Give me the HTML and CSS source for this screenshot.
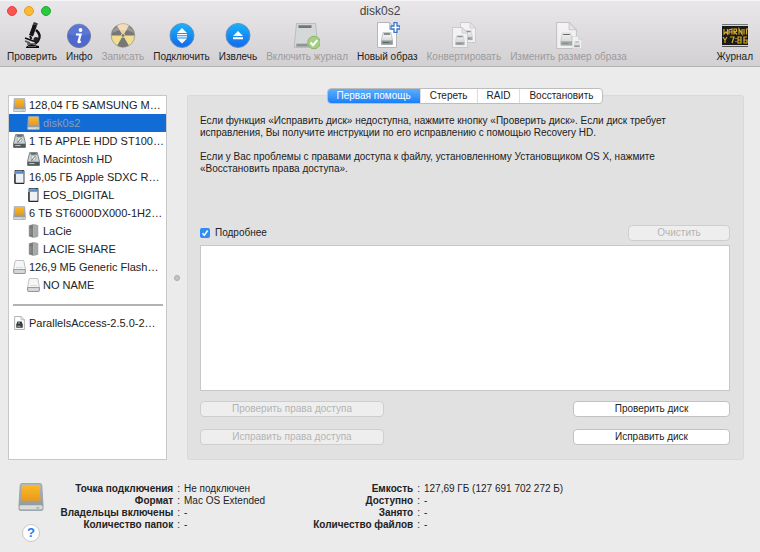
FILE: index.html
```html
<!DOCTYPE html>
<html lang="ru">
<head>
<meta charset="utf-8">
<title>disk0s2</title>
<link rel="stylesheet" href="styles.css">
</head>
<body>
<svg class="defs" aria-hidden="true">
  <defs>
    <linearGradient id="orange" x1="0" y1="0" x2="0" y2="1"><stop offset="0" stop-color="#fdb924"/><stop offset="1" stop-color="#e99a1c"/></linearGradient>
    <linearGradient id="metal" x1="0" y1="0" x2="0" y2="1"><stop offset="0" stop-color="#b4b8bb"/><stop offset="1" stop-color="#8f9498"/></linearGradient>
    <linearGradient id="silver" x1="0" y1="0" x2="0" y2="1"><stop offset="0" stop-color="#fdfdfd"/><stop offset="1" stop-color="#c4c8c9"/></linearGradient>
    <linearGradient id="blue" x1="0" y1="0" x2="0" y2="1"><stop offset="0" stop-color="#18b4fb"/><stop offset="1" stop-color="#1567ea"/></linearGradient>
    <symbol id="ext" viewBox="0 0 24 27">
      <path d="M3 .5h18q1.200 0 1.400 1.500l1.200 19v4q0 1.500-1.500 1.500H1.900Q.4 26.500.4 25v-4L1.600 2Q1.800.5 3 .5z" fill="url(#metal)" stroke="#9a9fa3" stroke-width=".8"/>
      <path d="M3.700 2h16.600l.8 15H2.900z" fill="url(#orange)"/>
      <rect x="1" y="21.500" width="22" height="4" rx="1" fill="#d9dddd"/>
      <path d="M17 24h3" stroke="#71b873" stroke-width="1"/>
    </symbol>
    <symbol id="flash" viewBox="0 0 13 14">
      <path d="M2 1.500q0-1 1-1h7q1 0 1 1l1.400 8v3q0 1-1 1H1.600q-1 0-1-1v-3z" fill="#f6f6f6" stroke="#b0b3b5" stroke-width=".8"/>
      <path d="M.7 9.500h11.600v3q0 1-1 1H1.700q-1 0-1-1z" fill="#d5d7d8" stroke="#85898b" stroke-width=".8"/>
      <path d="M3 7.500h7" stroke="#dadcdd"/>
    </symbol>
    <symbol id="hdd" viewBox="0 0 12 13">
      <path d="M2.500.5h7l2 8v4H.5v-4z" fill="#cdd3d3" stroke="#6f7777" stroke-width=".8"/>
      <path d="M3.300 1.800h5.600" stroke="#3d4242" stroke-width="1.200"/>
      <circle cx="6" cy="5.500" r="2.300" fill="#e7ebeb" stroke="#929a9a" stroke-width=".6"/>
      <path d="M7.500 4 4 8" stroke="#515858" stroke-width=".8"/>
      <path d="M.6 9h10.800v3.500H.6z" fill="#525858"/><path d="M2 10.700h5" stroke="#bbc1c1"/>
    </symbol>
    <symbol id="sd" viewBox="0 0 11 14">
      <path d="M1 .5h9v13H1z" fill="#eef1f4" stroke="#3e454c"/>
      <path d="M1.500 1h8v2.700h-8z" fill="#4580c7"/><path d="M3 .5v2M5 .5v2M7 .5v2" stroke="#b9d2ef" stroke-width=".7"/>
      <path d="M.9 4v9.500M1 13.400h9" stroke="#252b31" stroke-width="1.200"/>
    </symbol>
    <symbol id="tower" viewBox="0 0 10 13">
      <path d="m1 1.500 4-1v12l-4-1.200z" fill="#747678"/><path d="m5 .5 4 .8v10.200l-4 1z" fill="#a6a8aa"/>
      <path d="m1 1.500 4-1 4 .8v10.200l-4 1-4-1.200z" fill="none" stroke="#8a8c8e" stroke-width=".6"/>
      <path d="M2.200 4v6M3.500 3.700v6.500" stroke="#999b9d" stroke-width=".5"/>
    </symbol>
    <symbol id="drive" viewBox="0 0 12 13">
      <path d="M2 .5h8L11.500 8v4.500H.5V8z" fill="url(#silver)" stroke="#a4a9a9" stroke-width=".6"/>
      <path d="M2.800 2h6.400" stroke="#343838" stroke-width="1.100"/>
      <path d="M.5 8.500h11v4H.5z" fill="#8d9595"/><path d="M2 10.500h6" stroke="#545b5b" stroke-width=".8"/>
    </symbol>
    <symbol id="doc" viewBox="0 0 20 26">
      <path d="M.5.500h12l7 7v18H.5z" fill="#fcfcfc" stroke="#b6b6b8"/>
      <path d="M12.500.500v7h7z" fill="#e8e8e9" stroke="#b6b6b8" stroke-width=".8"/>
      <use href="#drive" x="4" y="10" width="12" height="13"/>
    </symbol>
  </defs>
</svg>

<header class="titlebar">
  <div class="title-row">
    <div class="lights">
      <button class="light close" aria-label="Закрыть"></button>
      <button class="light minimize" aria-label="Свернуть"></button>
      <button class="light expand" aria-label="Развернуть"></button>
    </div>
    <h1>disk0s2</h1>
  </div>
  <nav class="toolbar">
    <button class="tool">
      <svg viewBox="0 0 26 28" width="26" height="28">
        <path d="m14 2 4 1.500-4 11-4-1.500z" fill="#161616"/><path d="m14.500 1 4 1.500" stroke="#333" stroke-width="2"/>
        <path d="m12.300 5-2.600 7" stroke="#ddd" stroke-width=".7"/>
        <path d="m11 14 1.500 3" stroke="#111" stroke-width="2"/>
        <path d="M17 8q6 5 2 11l-3 3" fill="none" stroke="#111" stroke-width="2.400"/>
        <path d="m6 16 11 4" stroke="#111" stroke-width="1.800"/><circle cx="17" cy="17.500" r="2.500" fill="#222"/>
        <path d="m6 19 5 2M8 22h9" stroke="#555" stroke-width="1.500"/>
        <path d="M7 25q4-4 8-2l5 1v2H7z" fill="#0c0c0c"/><path d="M9 24.500h8" stroke="#999" stroke-width=".6"/>
      </svg>
      <span>Проверить</span>
    </button>
    <button class="tool">
      <svg viewBox="0 0 26 28" width="26" height="28">
        <circle cx="13" cy="14" r="11.500" fill="#4d68cf" stroke="#6f7894"/><path d="M2.500 12a10.500 10.500 0 0 1 21 0q-10 4-21 0z" fill="#6c83da" opacity=".5"/>
        <circle cx="14.500" cy="8" r="1.900" fill="#fff"/>
        <path d="M10 12.500h4.500l-2 7.200q0 1 2.300-.4" fill="none" stroke="#fff" stroke-width="2.200"/>
      </svg>
      <span>Инфо</span>
    </button>
    <button class="tool" disabled>
      <svg viewBox="0 0 26 28" width="26" height="28">
        <circle cx="13" cy="13.500" r="11.800" fill="#f0dd8d" stroke="#aaa69a"/>
        <path d="M13 13.500 7.200 3.500A11.600 11.600 0 0 0 1.400 13.500zM13 13.500h11.600A11.600 11.600 0 0 0 18.800 3.500zM13 13.500 7.200 23.500a11.600 11.600 0 0 0 11.600 0z" fill="#777" />
        <path d="M13 13.500 7.200 3.500a11.600 11.600 0 0 1 11.600 0z" fill="#ecd1aa"/>
        <path d="M2 11q11-6 22 0A11.500 11.500 0 0 0 2 11z" fill="#fff" opacity=".25"/>
        <circle cx="13" cy="13.500" r="1.800" fill="#777" stroke="#eee0a0" stroke-width=".8"/>
      </svg>
      <span>Записать</span>
    </button>
    <button class="tool">
      <svg viewBox="0 0 26 28" width="26" height="28">
        <circle cx="13" cy="13.500" r="12" fill="url(#blue)" stroke="#5c92c8" stroke-width="1"/>
        <path d="m13 6 5 5H8zM8 12h10v1.200H8zM8 14.300h10v1.200H8zM8 16.500h10l-5 5z" fill="#fff"/>
      </svg>
      <span>Подключить</span>
    </button>
    <button class="tool">
      <svg viewBox="0 0 26 28" width="26" height="28">
        <circle cx="13" cy="13.500" r="12" fill="url(#blue)" stroke="#5c92c8" stroke-width="1"/>
        <path d="m13 9 5 5H8zM8 15.300h10v2H8z" fill="#fff"/>
      </svg>
      <span>Извлечь</span>
    </button>
    <button class="tool" disabled>
      <svg viewBox="0 0 26 28" width="26" height="28">
        <path d="M2.500 1.500h19l2 20v4H.5v-4z" fill="#d4d9d8" stroke="#b8bebd"/>
        <path d="M4.500 4.500h13" stroke="#727776" stroke-width="3"/><path d="M4.500 3.500h13" stroke="#a3a8a7" stroke-dasharray="1 1"/>
        <path d="M2 21.500h21v3.500H2z" fill="#a7adac"/><path d="M3 23h10" stroke="#777d7c"/>
        <circle cx="20" cy="20.500" r="6.300" fill="#a4cf84" stroke="#87b869"/><path d="m16.500 20.500 2.500 2.700 4.300-5" fill="none" stroke="#fff" stroke-width="2"/>
      </svg>
      <span>Включить журнал</span>
    </button>
    <button class="tool">
      <svg viewBox="0 0 26 28" width="26" height="28">
        <use href="#doc" x="3" y="0" width="20" height="26"/>
        <path d="M20 .7h3v3.300h3v3h-3v3.300h-3V7h-3V4h3z" fill="#fff" stroke="#3678cb" stroke-width="1.300"/>
      </svg>
      <span>Новый образ</span>
    </button>
    <button class="tool" disabled>
      <svg class="faded" viewBox="0 0 26 28" width="26" height="28">
        <use href="#doc" x="9" y="0" width="16" height="21"/><use href="#doc" x="1" y="5" width="16" height="21"/>
      </svg>
      <span>Конвертировать</span>
    </button>
    <button class="tool" disabled>
      <svg class="faded" viewBox="0 0 26 28" width="26" height="28">
        <use href="#doc" x="0" y="0" width="21" height="27"/><use href="#doc" x="16" y="14" width="10" height="13"/>
      </svg>
      <span>Изменить размер образа</span>
    </button>
    <button class="tool last">
      <svg viewBox="0 0 26 28" width="26" height="28">
        <path d="M0 2h26v23H0z" fill="#d6d6d6"/><path d="M0 4h26v19H0z" fill="#191a1c"/>
        <path d="M0 2.500h26" stroke="#777"/><path d="M0 24.500h26" stroke="#555"/>
        <g fill="none" stroke="#d9a928" stroke-width="1.200">
          <path d="M2 7v5l2-2 1.500 2V7M7 12.500V8l3-1v5.500M7 10h3M12 12.500V7h2.500v2.500H12l3 3M17 12.500V7l3 5V7M22 7v5.500M24.500 12.500V7H26"/>
          <path d="m1 15 2 3 2-3M3 18v3M8 15h4l-2 6M14 16v1M14 19v1M16 15h3v6h-3zM16 18h3M25 15h-3v6h3v-3h-3"/>
        </g>
      </svg>
      <span>Журнал</span>
    </button>
  </nav>
</header>

<main class="workspace">
  <aside class="disks">
    <ul>
      <li><svg class="icon"><use href="#ext"/></svg><span>128,04 ГБ SAMSUNG M…</span></li>
      <li class="child selected"><svg class="icon"><use href="#ext"/></svg><span>disk0s2</span></li>
      <li><svg class="icon"><use href="#hdd"/></svg><span>1 ТБ APPLE HDD ST100…</span></li>
      <li class="child"><svg class="icon"><use href="#hdd"/></svg><span>Macintosh HD</span></li>
      <li><svg class="icon"><use href="#sd"/></svg><span>16,05 ГБ Apple SDXC R…</span></li>
      <li class="child"><svg class="icon"><use href="#sd"/></svg><span>EOS_DIGITAL</span></li>
      <li><svg class="icon"><use href="#ext"/></svg><span>6 ТБ ST6000DX000-1H2…</span></li>
      <li class="child"><svg class="icon"><use href="#tower"/></svg><span>LaCie</span></li>
      <li class="child"><svg class="icon"><use href="#tower"/></svg><span>LACIE SHARE</span></li>
      <li><svg class="icon"><use href="#flash"/></svg><span>126,9 МБ Generic Flash…</span></li>
      <li class="child"><svg class="icon"><use href="#flash"/></svg><span>NO NAME</span></li>
    </ul>
    <hr>
    <ul>
      <li><svg class="icon" viewBox="0 0 12 13"><path d="M1.500.5h6l3 3v9h-9z" fill="#fff" stroke="#a6a6a6" stroke-width=".8"/><path d="M7.500.5v3h3" fill="none" stroke="#a6a6a6" stroke-width=".7"/><path d="M4 5h4l1 3v3H3V8z" fill="#343a3b"/><path d="M4.500 6.500h2M4 9.500h3" stroke="#cbd3d3" stroke-width=".8"/></svg><span>ParallelsAccess-2.5.0-2…</span></li>
    </ul>
  </aside>
  <div class="splitter"><i></i></div>
  <section class="panel">
    <div class="tabs">
      <button class="active">Первая помощь</button><button>Стереть</button><button>RAID</button><button>Восстановить</button>
    </div>
    <div class="help-text">
      <p>Если функция «Исправить диск» недоступна, нажмите кнопку «Проверить диск». Если диск требует исправления, Вы получите инструкции по его исправлению с помощью Recovery HD.</p>
      <p>Если у Вас проблемы с правами доступа к файлу, установленному Установщиком OS X, нажмите «Восстановить права доступа».</p>
    </div>
    <div class="log-head">
      <label class="check"><input type="checkbox" checked>Подробнее</label>
      <button class="push clear" disabled>Очистить</button>
    </div>
    <textarea class="log" aria-label="Журнал операций" readonly></textarea>
    <div class="actions">
      <button class="push" disabled>Проверить права доступа</button>
      <button class="push">Проверить диск</button>
      <button class="push" disabled>Исправить права доступа</button>
      <button class="push">Исправить диск</button>
    </div>
  </section>
</main>

<footer class="info">
  <div class="badge">
    <svg width="26" height="28"><use href="#ext"/></svg>
    <button class="help" aria-label="Справка">?</button>
  </div>
  <dl class="volume">
    <dt>Точка подключения</dt><dd>Не подключен</dd>
    <dt>Формат</dt><dd>Mac OS Extended</dd>
    <dt>Владельцы включены</dt><dd>-</dd>
    <dt>Количество папок</dt><dd>-</dd>
  </dl>
  <dl class="capacity">
    <dt>Емкость</dt><dd>127,69 ГБ (127 691 702 272 Б)</dd>
    <dt>Доступно</dt><dd>-</dd>
    <dt>Занято</dt><dd>-</dd>
    <dt>Количество файлов</dt><dd>-</dd>
  </dl>
</footer>
</body>
</html>
```
FILE: styles.css
```css
* {
  box-sizing: border-box;
}

body {
  margin: 0;
  min-height: 100vh;
  display: flex;
  flex-direction: column;
  background: #ebebeb;
  color: #222;
  font: 10px/12px "Liberation Sans", Arial, sans-serif;
}

button {
  margin: 0;
  padding: 0;
  border: 0;
  background: none;
  color: inherit;
  font: inherit;
}

h1, p, ul, dl, dd {
  margin: 0;
  padding: 0;
}

.defs {
  position: absolute;
  width: 0;
  height: 0;
}

/* Window header */
.titlebar {
  background: linear-gradient(#e9e7e9, #d2d0d2);
  border-top: 1px solid #f6f5f6;
  border-bottom: 1px solid #b4b3b4;
  padding-bottom: 2px;
}

.title-row {
  display: grid;
  grid-template-columns: 1fr auto 1fr;
  align-items: center;
  height: 20px;
  padding: 0 7px;
}

.title-row h1 {
  color: #444;
  font-size: 12px;
  font-weight: normal;
  line-height: 16px;
}

.lights {
  display: flex;
  gap: 7px;
}

.light {
  width: 10px;
  height: 10px;
  border-radius: 50%;
}

.close {
  background: #fc5551;
  border: 1px solid #e2443f;
}

.minimize {
  background: #fdb932;
  border: 1px solid #e0a02a;
}

.expand {
  background: #29c940;
  border: 1px solid #1eaa30;
}

.toolbar {
  display: flex;
  gap: 9px;
  padding: 1px 7px 0;
}

.tool {
  display: flex;
  flex-direction: column;
  align-items: center;
  white-space: nowrap;
}

.tool span {
  line-height: 14px;
}

.tool:disabled {
  color: #9c9b9d;
}

.last {
  margin-left: auto;
}

.faded {
  opacity: .7;
}

/* Disk list and tab panel */
.workspace {
  flex: 1;
  display: flex;
  padding: 28px 16px 0 8px;
}

.disks {
  width: 159px;
  border: 1px solid #c8c8c8;
  background: #fff;
  font-size: 11px;
}

.disks ul {
  list-style: none;
}

.disks li {
  display: flex;
  align-items: center;
  gap: 3px;
  height: 18px;
  padding-left: 4px;
  white-space: nowrap;
}

.disks .child {
  padding-left: 18px;
}

.disks .selected {
  background: #116cd6;
  color: #8e9cb4;
}

.icon {
  flex: none;
  width: 13px;
  height: 14px;
}

.disks hr {
  height: 2px;
  margin: 10px 3px 8px 4px;
  border: 0;
  background: #b2b2b2;
}

.splitter {
  width: 20px;
  display: flex;
  align-items: center;
  justify-content: center;
}

.splitter i {
  width: 6px;
  height: 6px;
  border: 1px solid #aaa;
  border-radius: 50%;
  background: #c5c5c5;
}

.panel {
  flex: 1;
  display: flex;
  flex-direction: column;
  padding: 0 13px 14px 12px;
  border: 1px solid #d9d9d9;
  border-radius: 3px;
  background: #e1e1e1;
}

.tabs {
  display: flex;
  align-self: center;
  margin-top: -8px;
  border: 1px solid #bdbdbd;
  border-radius: 4px;
  background: #fff;
}

.tabs button {
  height: 14px;
  padding: 0 9px;
  border-left: 1px solid #ddd;
  line-height: 14px;
}

.tabs .active {
  border: 0;
  border-radius: 3px 0 0 3px;
  background: linear-gradient(#5eaefb, #1a80fa);
  color: #fff;
}

.help-text {
  display: grid;
  gap: 12px;
  padding: 11px 24px 0 0;
}

.log-head {
  display: flex;
  align-items: center;
  justify-content: space-between;
  margin: 50px 0 4px;
}

.check {
  display: flex;
  align-items: center;
  gap: 5px;
}

.check input {
  appearance: none;
  width: 10px;
  height: 10px;
  margin: 0;
  border-radius: 2px;
  background: #2f8df8;
}

.check input:checked {
  background: #2f8df8 url('data:image/svg+xml,<svg xmlns="http://www.w3.org/2000/svg" viewBox="0 0 10 10"><path d="M2.500 5.200 4.300 7.300 7.700 2.500" fill="none" stroke="white" stroke-width="1.500"/></svg>') center / 10px 10px;
}

.push {
  height: 16px;
  border: 1px solid #c2c2c2;
  border-radius: 4px;
  background: #fff;
  line-height: 14px;
}

.push:disabled {
  border-color: #cecece;
  background: #eee;
  color: #b4b4b4;
}

.clear {
  width: 102px;
}

.log {
  flex: 1;
  min-height: 120px;
  border: 1px solid #c8c8c8;
  background: #fff;
  resize: none;
}

.actions {
  display: grid;
  grid-template-columns: 184px 157px;
  justify-content: space-between;
  gap: 12px;
  margin-top: 10px;
}

/* Volume details */
.info {
  display: flex;
  padding: 23px 18px 10px;
}

.badge {
  display: flex;
  flex-direction: column;
  align-items: center;
  gap: 13px;
}

.help {
  width: 18px;
  height: 18px;
  border: 1px solid #c9c9c9;
  border-radius: 50%;
  background: #fff;
  color: #1a80fa;
  font-size: 13px;
  font-weight: bold;
  line-height: 16px;
}

.info dl {
  display: grid;
  grid-auto-rows: 12px;
  column-gap: 4px;
}

.volume {
  grid-template-columns: 136px 136px;
}

.capacity {
  grid-template-columns: 100px auto;
}

.info dt {
  display: flex;
  justify-content: flex-end;
  gap: 4px;
  font-weight: bold;
  white-space: nowrap;
}

.info dt::after {
  content: ":";
  font-weight: normal;
}
```
